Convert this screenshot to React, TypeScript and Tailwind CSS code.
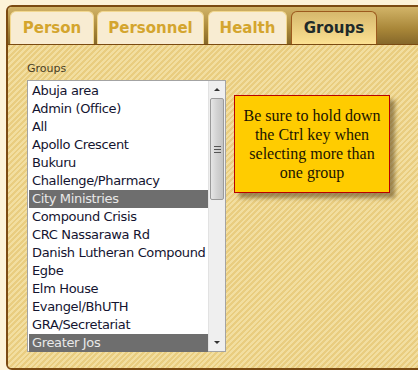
import React from 'react';

const groups = [
  'Abuja area',
  'Admin (Office)',
  'All',
  'Apollo Crescent',
  'Bukuru',
  'Challenge/Pharmacy',
  'City Ministries',
  'Compound Crisis',
  'CRC Nassarawa Rd',
  'Danish Lutheran Compound',
  'Egbe',
  'Elm House',
  'Evangel/BhUTH',
  'GRA/Secretariat',
  'Greater Jos',
];

const selected = ['City Ministries', 'Greater Jos'];

const tabs = [
  { label: 'Person', w: 'w-[84px]', ml: 'ml-[2px]' },
  { label: 'Personnel', w: 'w-[107px]', ml: 'ml-[3px]' },
  { label: 'Health', w: 'w-[79px]', ml: 'ml-[4px]' },
  { label: 'Groups', w: 'w-[86px]', ml: 'ml-[4px]', active: true },
];

function Scrollbar() {
  return (
    <div className="w-[17px] bg-[#efefef] border-l border-[#e2e2e2] flex flex-col">
      <div className="h-[17px] flex items-center justify-center">
        <div className="w-0 h-0 border-l-[3px] border-r-[3px] border-b-[3px] border-l-transparent border-r-transparent border-b-[#333]" />
      </div>
      <div className="mx-[1px] h-[102px] rounded-[2px] border border-[#9a9a9a] bg-[linear-gradient(90deg,#e6e6e6,#d2d2d2_50%,#c4c4c4)] flex flex-col items-center justify-center gap-[2px]">
        <div className="w-[7px] h-px bg-[#555]" />
        <div className="w-[7px] h-px bg-[#555]" />
        <div className="w-[7px] h-px bg-[#555]" />
      </div>
      <div className="flex-1" />
      <div className="h-[18px] flex items-center justify-center">
        <div className="w-0 h-0 border-l-[3px] border-r-[3px] border-t-[3px] border-l-transparent border-r-transparent border-t-[#333]" />
      </div>
    </div>
  );
}

export default function App() {
  return (
    <div className="w-[418px] h-[370px] overflow-hidden bg-[#fdf3d8] pt-[5px] pl-[6px]">
      <div className="w-[440px] h-[365px] border-2 border-[#7b4b12] rounded-[6px] overflow-hidden flex flex-col">
        {/* Tab strip */}
        <div className="h-[38px] shrink-0 flex items-end border-b border-[#7b4b12] bg-[linear-gradient(180deg,#d2b468,#a88638_60%,#86682a)]">
          {tabs.map(t => (
            <div
              key={t.label}
              className={
                t.active
                  ? `${t.w} ${t.ml} h-[33px] rounded-t-[6px] border border-b-0 border-[#9c5a1e] bg-[linear-gradient(180deg,#d6b86c,#fce192)] flex items-center justify-center text-[15px] font-bold text-[#1e2a2a] font-['DejaVu_Sans',sans-serif]`
                  : `${t.w} ${t.ml} h-[33px] rounded-t-[6px] border border-b-0 border-[#f2d890] bg-[#f8ecd2] flex items-center justify-center text-[15px] font-bold text-[#d4a52e] font-['DejaVu_Sans',sans-serif]`
              }
            >
              {t.label}
            </div>
          ))}
        </div>

        {/* Content */}
        <div className="flex-1 pl-[19px] pt-[17px] bg-[repeating-linear-gradient(135deg,#e9cd80_0px,#e9cd80_2px,#f2dea0_2px,#f2dea0_4px)]">
          <div className="text-[11px] leading-[13px] text-[#4a3e26] font-['DejaVu_Sans',sans-serif]">Groups</div>
          <div className="flex items-start mt-[5px]">
            <div className="w-[199px] h-[272px] border border-[#a3a3a3] bg-white flex">
              <div className="flex-1 pt-px pl-px">
                {groups.map(g => (
                  <div
                    key={g}
                    className={
                      selected.includes(g)
                        ? 'h-[18px] pl-[3px] text-[13px] leading-[18px] whitespace-nowrap bg-[#6e6e6e] text-[#e8e8e8] font-["DejaVu_Sans",sans-serif] tracking-[-0.35px]'
                        : 'h-[18px] pl-[3px] text-[13px] leading-[18px] whitespace-nowrap text-[#141430] font-["DejaVu_Sans",sans-serif] tracking-[-0.35px]'
                    }
                  >
                    {g}
                  </div>
                ))}
              </div>
              <Scrollbar />
            </div>
            <div className="ml-[8px] mt-[15px] w-[156px] h-[98px] border border-[#b80000] bg-[#ffcc00] shadow-[5px_5px_4px_rgba(90,70,30,0.55)] flex items-center justify-center px-[4px] text-center text-[16px] leading-[19px] text-[#1a1400] font-['Liberation_Serif',serif]">
              Be sure to hold down the Ctrl key when selecting more than one group
            </div>
          </div>
        </div>
      </div>
    </div>
  );
}
